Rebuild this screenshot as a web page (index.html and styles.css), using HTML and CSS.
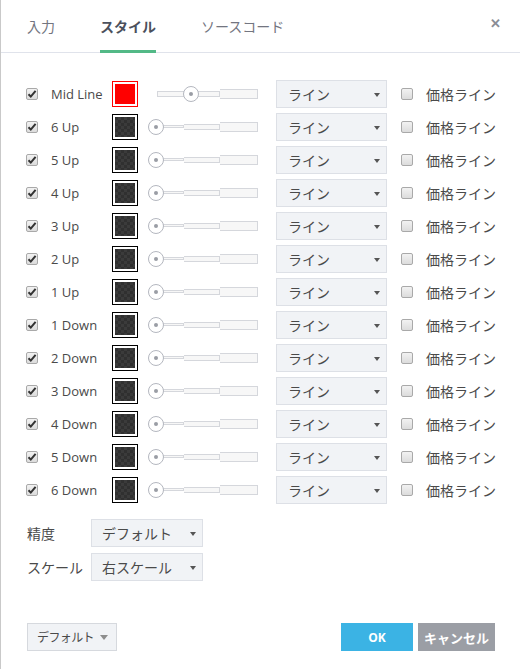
FILE: index.html
```html
<!DOCTYPE html>
<html lang="ja">
<head>
    <meta charset="UTF-8">
    <title>スタイル</title>
    <link rel="stylesheet" href="styles.css">
</head>
<body>
    <div class="dialog">
        <div class="tabs">
            <div class="tab">入力</div>
            <div class="tab active">スタイル</div>
            <div class="tab">ソースコード</div>
            <div class="close">&#x2715;</div>
        </div>

        <div class="lines" id="lines"></div>

        <div class="opt-row">
            <span class="opt-label">精度</span>
            <div class="select small">デフォルト<span class="caret"></span></div>
        </div>
        <div class="opt-row">
            <span class="opt-label">スケール</span>
            <div class="select small">右スケール<span class="caret"></span></div>
        </div>

        <div class="footer">
            <div class="btn-default">デフォルト<span class="caret big"></span></div>
            <div class="actions">
                <div class="btn ok">OK</div>
                <div class="btn cancel">キャンセル</div>
            </div>
        </div>
    </div>

    <script>
        // build the line rows
        const names = ['Mid Line', '6 Up', '5 Up', '4 Up', '3 Up', '2 Up', '1 Up',
            '1 Down', '2 Down', '3 Down', '4 Down', '5 Down', '6 Down'];
        const lines = document.getElementById('lines');
        const check = '<svg width="12" height="12" viewBox="0 0 12 12"><path d="M2.5 6.2 L4.8 8.6 L9.6 2.8" fill="none" stroke="#333" stroke-width="2"/></svg>';

        names.forEach((name, i) => {
            const mid = i === 0;
            const row = document.createElement('div');
            row.className = 'line-row';
            row.innerHTML =
                '<span class="cb checked">' + check + '</span>' +
                '<span class="name">' + name + '</span>' +
                '<span class="swatch' + (mid ? ' red' : '') + '"><span class="fill"></span></span>' +
                '<span class="slider' + (mid ? ' mid' : '') + '">' +
                    '<span class="seg s1"></span><span class="seg s2"></span><span class="seg s3"></span>' +
                    '<span class="knob" style="left:' + (mid ? 35 : 0) + 'px"></span>' +
                '</span>' +
                '<div class="select">ライン<span class="caret"></span></div>' +
                '<span class="cb"></span>' +
                '<span class="price">価格ライン</span>';
            lines.appendChild(row);
        });
    </script>
</body>
</html>
```

FILE: styles.css
```css
body {
    margin: 0;
    font-family: "Open Sans", "Noto Sans CJK JP", sans-serif;
    color: #4a4a4a;
    background: #ffffff;
}

.dialog {
    width: 519px;
    height: 669px;
    border-left: 1px solid #c9c9c9;
    display: flex;
    flex-direction: column;
    position: relative;
}

/* tabs */
.tabs {
    height: 52px;
    display: flex;
    align-items: stretch;
    border-bottom: 1px solid #e0e3eb;
    padding-left: 26px;
    position: relative;
}

.tab {
    font-size: 14px;
    color: #737580;
    display: flex;
    align-items: center;
    margin-right: 45px;
    padding-top: 1px;
    box-sizing: border-box;
    border-bottom: 3px solid transparent;
    margin-bottom: -1px;
}

.tab.active {
    color: #4b505c;
    font-weight: bold;
    border-bottom-color: #53b987;
}

.close {
    position: absolute;
    right: 19px;
    top: 14px;
    font-size: 13px;
    color: #8a8d95;
    font-weight: bold;
}

/* line rows */
.lines {
    padding-top: 24px;
    padding-bottom: 13px;
}

.line-row {
    height: 33px;
    display: flex;
    align-items: center;
    padding-left: 25px;
}

.cb {
    width: 12px;
    height: 12px;
    box-sizing: border-box;
    border: 1px solid #a9a9a9;
    border-radius: 2px;
    background: linear-gradient(#f2f2f2, #dcdcdc);
    display: inline-flex;
}

.cb svg {
    margin: -1px;
}

.name {
    font-size: 13px;
    width: 61px;
    margin-left: 13px;
    color: #4a4a4a;
}

.swatch {
    width: 26px;
    height: 26px;
    box-sizing: border-box;
    border: 1px solid #000;
    padding: 2px;
    background: #fff;
    display: inline-flex;
}

.swatch .fill {
    flex: 1;
    background-color: #303030;
    background-image:
        linear-gradient(45deg, #3b3b3b 25%, transparent 25%, transparent 75%, #3b3b3b 75%),
        linear-gradient(45deg, #3b3b3b 25%, transparent 25%, transparent 75%, #3b3b3b 75%);
    background-size: 6px 6px;
    background-position: 0 0, 3px 3px;
}

.swatch.red {
    border-color: #f00;
}

.swatch.red .fill {
    background: #f00;
}

.slider {
    position: relative;
    width: 110px;
    height: 18px;
    margin-left: 10px;
    display: flex;
    align-items: center;
    padding-left: 9px;
    box-sizing: border-box;
}

.seg {
    box-sizing: border-box;
    border: 1px solid #d5d7dc;
    border-left: none;
    background: #f7f7f7;
}

.s1 {
    width: 27px;
    height: 3px;
    border-left: 1px solid #d5d7dc;
}

.s2 {
    width: 36px;
    height: 6px;
}

.s3 {
    width: 38px;
    height: 10px;
}

.slider.mid .s1 {
    height: 6px;
    border-right: none;
}

.knob {
    position: absolute;
    top: 1px;
    width: 16px;
    height: 16px;
    box-sizing: border-box;
    border: 1px solid #b4b7bf;
    border-radius: 50%;
    background: #fff;
}

.knob::after {
    content: "";
    position: absolute;
    left: 5px;
    top: 5px;
    width: 4px;
    height: 4px;
    border-radius: 50%;
    background: #9a9da5;
}

.select {
    width: 111px;
    height: 28px;
    box-sizing: border-box;
    margin-left: 18px;
    margin-right: 14px;
    border: 1px solid #dde0e6;
    background: #f1f3f6;
    font-size: 14px;
    color: #4a4a4a;
    display: flex;
    align-items: center;
    padding-left: 11px;
    position: relative;
}

.caret {
    position: absolute;
    right: 6px;
    top: 12px;
    border-left: 3.5px solid transparent;
    border-right: 3.5px solid transparent;
    border-top: 4px solid #555;
}

.price {
    font-size: 14px;
    margin-left: 13px;
    color: #4a4a4a;
}

/* precision / scale */
.opt-row {
    display: flex;
    align-items: center;
    height: 27px;
    margin-bottom: 7px;
    padding-left: 26px;
}

.opt-label {
    font-size: 14px;
    width: 64px;
}

.select.small {
    margin-left: 0;
    width: 112px;
    padding-left: 10px;
}

/* footer */
.footer {
    margin-top: auto;
    margin-bottom: 18px;
    display: flex;
    align-items: center;
    justify-content: space-between;
    padding: 0 25px 0 26px;
}

.btn-default {
    position: relative;
    width: 90px;
    height: 28px;
    box-sizing: border-box;
    border: 1px solid #d6d9de;
    background: #f1f3f6;
    font-size: 12px;
    letter-spacing: -0.6px;
    display: flex;
    align-items: center;
    padding-left: 9px;
}

.caret.big {
    right: 8px;
    top: 11px;
    border-left-width: 4px;
    border-right-width: 4px;
    border-top: 5px solid #8d8d8d;
}

.actions {
    display: flex;
    gap: 5px;
}

.btn {
    height: 28px;
    display: flex;
    align-items: center;
    justify-content: center;
    color: #fff;
    font-weight: bold;
}

.ok {
    width: 72px;
    background: #3bb3e4;
    font-size: 12px;
}

.cancel {
    width: 77px;
    background: #9b9ea5;
    font-size: 13px;
}
```
